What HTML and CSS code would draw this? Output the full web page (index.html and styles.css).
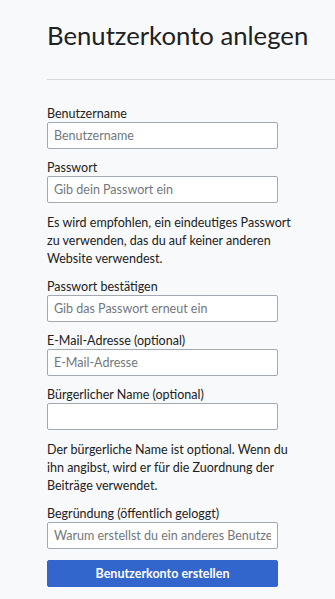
FILE: index.html
```html
<!DOCTYPE html>
<html lang="de">
<head>
<meta charset="utf-8">
<title>Benutzerkonto anlegen</title>
<link rel="stylesheet" href="styles.css">
</head>
<body>
<div class="page">
  <header class="page-header">
    <h1 class="title">Benutzerkonto anlegen</h1>
  </header>
  <form class="form">
    <div class="field">
      <label class="label" for="u">Benutzername</label>
      <input class="input" id="u" type="text" placeholder="Benutzername">
    </div>
    <div class="field">
      <label class="label" for="p">Passwort</label>
      <input class="input" id="p" type="password" placeholder="Gib dein Passwort ein">
    </div>
    <p class="help">Es wird empfohlen, ein eindeutiges Passwort zu verwenden, das du auf keiner anderen Website verwendest.</p>
    <div class="field">
      <label class="label" for="p2">Passwort bestätigen</label>
      <input class="input" id="p2" type="password" placeholder="Gib das Passwort erneut ein">
    </div>
    <div class="field">
      <label class="label" for="e">E-Mail-Adresse (optional)</label>
      <input class="input" id="e" type="email" placeholder="E-Mail-Adresse">
    </div>
    <div class="field">
      <label class="label" for="r">Bürgerlicher Name (optional)</label>
      <input class="input" id="r" type="text">
    </div>
    <p class="help">Der bürgerliche Name ist optional. Wenn du ihn angibst, wird er für die Zuordnung der Beiträge verwendet.</p>
    <div class="field">
      <label class="label" for="b">Begründung (öffentlich geloggt)</label>
      <input class="input" id="b" type="text" placeholder="Warum erstellst du ein anderes Benutzerkonto?">
    </div>
    <button class="submit" type="button">Benutzerkonto erstellen</button>
  </form>
</div>
</body>
</html>
```

FILE: styles.css
```css
html, body {
  margin: 0;
  padding: 0;
  background: #f8f9fa;
}
body {
  font-family: Lato, "Noto Sans", sans-serif;
  color: #202122;
  font-size: 12.5px;
}
.page {
  padding-left: 47px;
}
.page-header {
  padding-top: 20px;
  padding-bottom: 29px;
  border-bottom: 1px solid #d6d9dd;
}
.title {
  margin: 0;
  font-size: 25.7px;
  font-weight: 400;
  line-height: 30px;
  color: #202122;
}
.form {
  width: 252px;
  padding-top: 26px;
  display: flex;
  flex-direction: column;
  align-items: flex-start;
  gap: 11px;
}
.field {
  display: flex;
  flex-direction: column;
}
.label {
  display: block;
  line-height: 16px;
  font-size: 12.5px;
  color: #202122;
}
.input {
  box-sizing: border-box;
  width: 231px;
  height: 27px;
  margin: 0;
  padding: 0 6px;
  border: 1px solid #a2a9b1;
  border-radius: 2px;
  background: #fff;
  font-family: Lato, "Noto Sans", sans-serif;
  font-size: 12.5px;
  color: #202122;
  outline: none;
}
.input::placeholder {
  color: #72777d;
  opacity: 1;
}
.help {
  width: 252px;
  margin: 0;
  line-height: 18px;
  font-size: 12.5px;
}
.submit {
  box-sizing: border-box;
  width: 231px;
  height: 27px;
  margin: 0;
  border: 1px solid #36c;
  border-radius: 2px;
  background: #36c;
  color: #fff;
  font-family: Lato, "Noto Sans", sans-serif;
  font-size: 12.5px;
  font-weight: 700;
  cursor: pointer;
}
```
